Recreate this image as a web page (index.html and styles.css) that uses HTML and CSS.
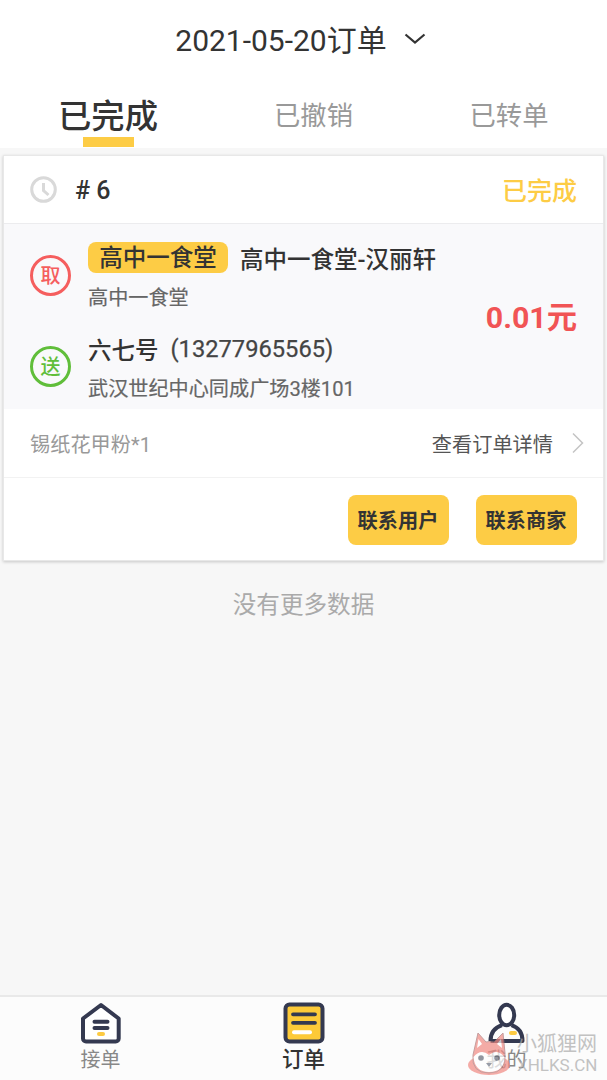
FILE: index.html
```html
<!DOCTYPE html>
<html lang="zh-CN">
<head>
<meta charset="utf-8">
<title>订单</title>
<link rel="stylesheet" href="styles.css">
</head>
<body>
<div class="app">
  <header class="header">
    <span class="header-title">2021-05-20订单</span>
    <svg class="header-arrow" width="22" height="12" viewBox="0 0 22 12"><path d="M1.500 1.500 11 9.500 20.500 1.500" fill="none" stroke="#333" stroke-width="2.200"/></svg>
  </header>
  <nav class="tabs">
    <span class="tab tab-active">已完成</span>
    <span class="tab">已撤销</span>
    <span class="tab">已转单</span>
  </nav>
  <main class="content">
    <article class="card">
      <div class="card-head">
        <svg width="28" height="28" viewBox="0 0 28 28" fill="none" stroke="#d9d9d9" stroke-width="3"><circle cx="13.500" cy="13.500" r="11.800"/><path d="M13.500 7v7.500l5 4.500"/></svg>
        <span class="card-no"># 6</span>
        <span class="card-status">已完成</span>
      </div>
      <div class="route">
        <div class="stops">
          <div class="stop">
            <span class="mark mark-pick">取</span>
            <div class="stop-text">
              <div class="stop-name"><span class="badge">高中一食堂</span><span>高中一食堂-汉丽轩</span></div>
              <div class="stop-address">高中一食堂</div>
            </div>
          </div>
          <div class="stop">
            <span class="mark mark-send">送</span>
            <div class="stop-text">
              <div class="stop-name"><span>六七号</span><span class="phone">(13277965565)</span></div>
              <div class="stop-address">武汉世纪中心同成广场3楼101</div>
            </div>
          </div>
        </div>
        <div class="price">0.01元</div>
      </div>
      <div class="goods">
        <span class="goods-name">锡纸花甲粉*1</span>
        <span class="goods-link">查看订单详情</span>
        <svg width="12" height="22" viewBox="0 0 12 22"><path d="M1 1.500 10.500 11 1 20.500" fill="none" stroke="#c4c4c4" stroke-width="1.500"/></svg>
      </div>
      <div class="actions">
        <button class="btn">联系用户</button>
        <button class="btn">联系商家</button>
      </div>
    </article>
    <p class="empty">没有更多数据</p>
  </main>
  <footer class="tabbar">
    <div class="tabbar-item">
      <svg width="42" height="42" viewBox="0 0 42 42" fill="none" stroke-linecap="round" stroke-linejoin="round"><path d="M21 3 38.700 16.500V36.500a3 3 0 0 1-3 3H6a3 3 0 0 1-3-3V16.500Z" fill="#fff" stroke="#343950" stroke-width="4"/><path d="M14.500 19.700h13M14.500 26h13" stroke="#343950" stroke-width="4"/><path d="M19 32h4" stroke="#fdca42" stroke-width="4"/></svg>
      <span>接单</span>
    </div>
    <div class="tabbar-item tabbar-current">
      <svg width="42" height="42" viewBox="0 0 42 42" fill="none" stroke-linecap="round"><rect x="2.500" y="2.500" width="37" height="37" rx="4" fill="#fdca38" stroke="#343950" stroke-width="4"/><path d="M10 12.300h22M10 20.800h22" stroke="#343950" stroke-width="3.800"/><path d="M11 30.200h16" stroke="#fff" stroke-width="4"/></svg>
      <span>订单</span>
    </div>
    <div class="tabbar-item">
      <svg width="42" height="42" viewBox="0 0 42 42" fill="none"><path d="M4.500 39C4.500 31 9 25.500 16 23.200M25.500 23.200C32.500 25.500 36.500 31 36.500 39H4.500" stroke="#343950" stroke-width="4" stroke-linejoin="round"/><ellipse cx="20.700" cy="13" rx="7.500" ry="10.200" fill="#fff" stroke="#343950" stroke-width="4"/><path d="M25 31h4" stroke="#fdca42" stroke-width="4" stroke-linecap="round"/></svg>
      <span>我的</span>
    </div>
    <div class="watermark">
      <svg width="50" height="48" viewBox="0 0 50 48">
        <ellipse cx="22" cy="34" rx="21" ry="10" fill="#f28a83"/>
        <path d="M6 24 11 2 19 11Q23 10 27 11L36 2 38 22Q40 42 22 42 4 42 6 24Z" fill="#f28a83" stroke="#ad7777"/>
        <path d="M11.500 8 10 17 15 13ZM34 8 30 13 35 17Z" fill="#fff"/>
        <path d="M6.500 26Q14 17 22 24 30 17 37.500 26 37 41 22 41 8 41 6.500 26Z" fill="#fff"/>
        <circle cx="14" cy="27" r="2.800" fill="#666b79"/><circle cx="30" cy="27" r="2.800" fill="#666b79"/>
        <path d="M19 32h6l-3 4Z" fill="#707786"/>
      </svg>
      <div class="watermark-text"><span class="watermark-name">小狐狸网</span><span class="watermark-site">XHLKS.CN</span></div>
    </div>
  </footer>
</div>
</body>
</html>
```
FILE: styles.css
```css
* { box-sizing: border-box; }
body { margin: 0; font-family: Roboto, "Noto Sans CJK SC", sans-serif; color: #333; }
.app { display: flex; flex-direction: column; width: 607px; height: 1080px; background: #f7f7f7; }
.header { display: flex; align-items: center; justify-content: center; gap: 17px; height: 82px; padding-right: 6px; background: #fff; }
.header-title { font-size: 30px; line-height: 40px; }
.header-arrow { margin-top: -5px; }
.tabs { display: grid; grid-template-columns: 216px 195px 196px; height: 66px; background: #fff; }
.tab { display: flex; flex-direction: column; align-items: center; font-size: 26.300px; line-height: 68px; color: #999; }
.tab-active { font-size: 33.300px; line-height: 69px; font-weight: 500; color: #333; }
.tab-active::after { content: ""; width: 51px; height: 10px; margin-top: -14px; background: #fdcc45; }
.content { flex: 1; padding: 7px 3px 0; }
.card { height: 406px; background: #fff; border: 1px solid #e8e8e8; box-shadow: 0 1px 3px rgba(0, 0, 0, .2); }
.card-head { display: flex; align-items: center; height: 68px; padding: 0 26px; border-bottom: 1px solid #ececee; }
.card-no { margin: 2px 0 0 17px; font-size: 25px; font-weight: 500; }
.card-status { margin: -1px 0 0 auto; font-size: 25px; font-weight: 500; color: #fdcc45; }
.route { display: flex; justify-content: space-between; height: 185px; padding: 17px 26px 0; background: #f9f9fb; }
.stops { display: flex; flex-direction: column; }
.stop { display: flex; flex-shrink: 0; gap: 17px; height: 91px; }
.mark { display: flex; align-items: center; justify-content: center; width: 41px; height: 41px; margin-top: 14px; border: 3px solid; border-radius: 50%; font-size: 20px; font-weight: 500; line-height: 20px; padding-top: 1px; }
.mark-pick { color: #f55e5e; }
.mark-send { color: #60be3a; }
.stop-name { display: flex; align-items: center; gap: 12px; height: 33px; font-size: 23.500px; font-weight: 500; }
.badge { width: 140px; height: 31px; border-radius: 8px; background: #fdcc45; line-height: 33px; text-align: center; }
.phone { font-size: 23.700px; font-weight: 400; color: #444; -webkit-text-stroke: .25px #444; }
.stop-address { height: 48px; font-size: 20.150px; line-height: 48px; color: #666; -webkit-text-stroke: .2px #666; }
.price { margin-top: 57px; font-size: 30.300px; font-weight: 700; line-height: 40px; color: #f15455; }
.goods { display: flex; align-items: center; height: 69px; padding: 0 19px 0 26px; border-bottom: 1px solid #f2f2f2; font-size: 20.200px; }
.goods-name { color: #999; }
.goods-link { margin: 0 19px 0 auto; color: #555; }
.actions { display: flex; justify-content: flex-end; gap: 27px; padding: 17px 26.500px 0 0; }
.btn { width: 101px; height: 50px; padding: 0; border: 0; border-radius: 8px; background: #fdcc45; color: #333; font: 700 20.200px/52px Roboto, "Noto Sans CJK SC", sans-serif; }
.empty { margin: 27px 0 0; font-size: 23.600px; line-height: 34px; text-align: center; color: #aaa; }
.tabbar { position: relative; display: grid; grid-template-columns: 201px 205px 201px; height: 85px; border-top: 2px solid #e9e9e9; background: #fcfcfc; }
.tabbar-item { display: flex; flex-direction: column; align-items: center; padding-top: 5px; font-size: 20px; line-height: 32px; color: #888; }
.tabbar-current { font-size: 21.500px; font-weight: 500; color: #333; }
.watermark { position: absolute; left: 467px; top: 34px; display: flex; opacity: .7; }
.watermark-text { display: flex; flex-direction: column; color: #aaa; white-space: nowrap; }
.watermark-name { font-size: 20px; line-height: 26px; }
.watermark-site { font-size: 17px; line-height: 16px; }
```
